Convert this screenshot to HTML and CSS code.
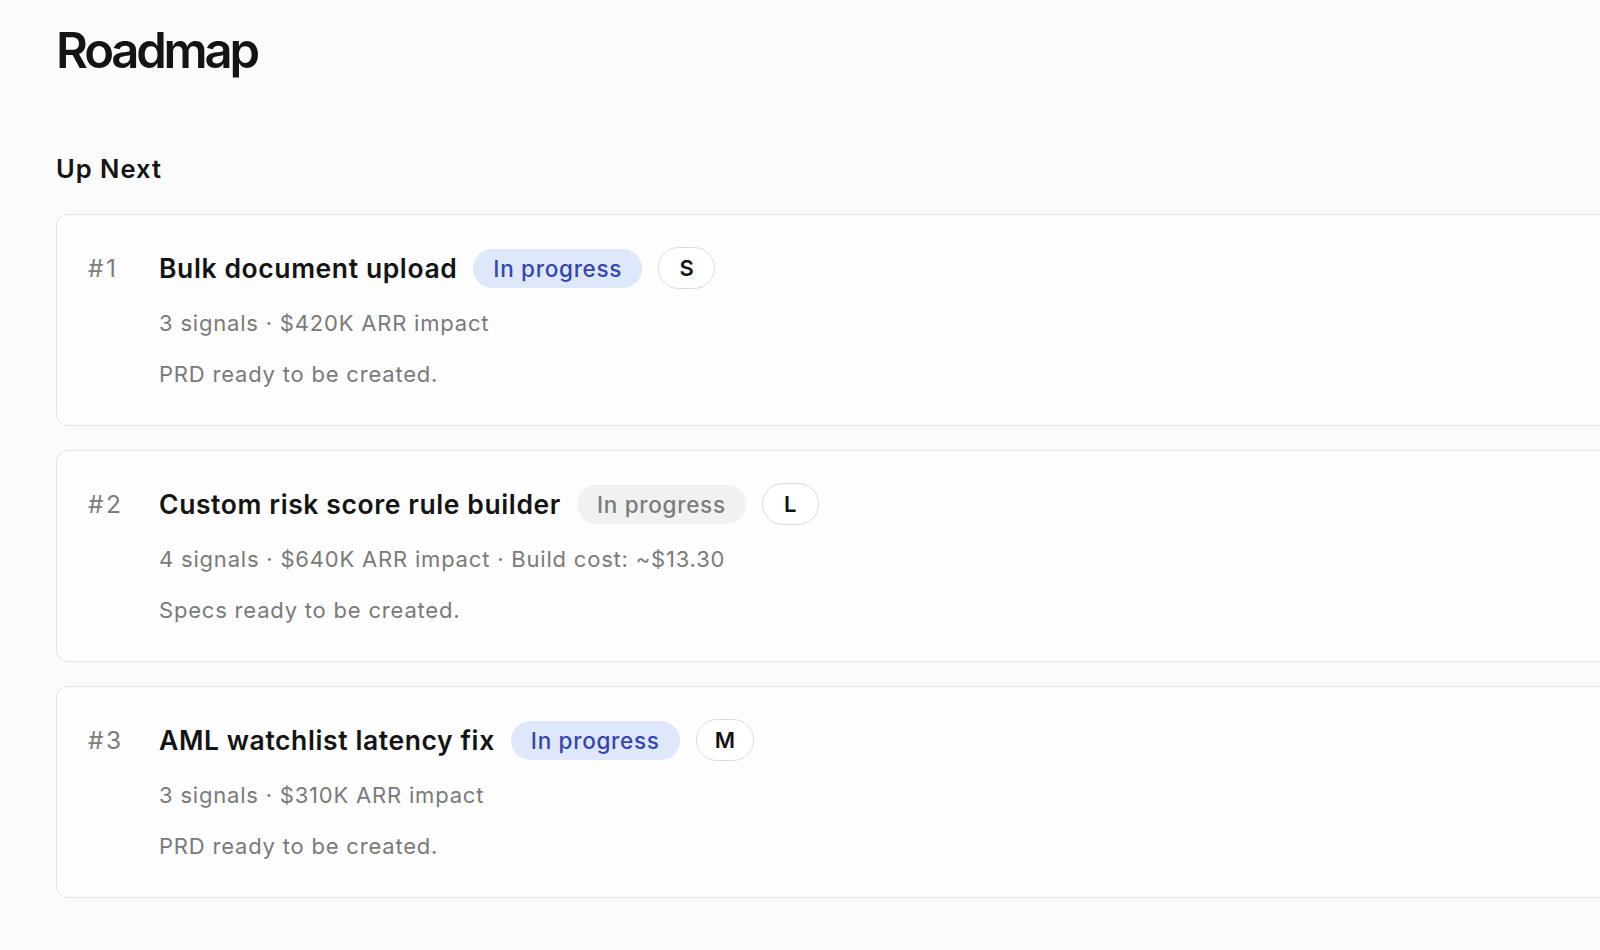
FILE: index.html
```html
<!DOCTYPE html>
<html>
  <head>
    <title>Roadmap</title>
    <meta name="viewport" content="width=device-width, initial-scale=1" />
    <link rel="stylesheet" href="styles.css">
  </head>
  <body>
    <div class="page">
      <h1>Roadmap</h1>
      <h2 class="section-title">Up Next</h2>
      <div class="item-list">
        <div class="item">
          <div class="rank">#1</div>
          <div class="item-body">
            <div class="item-head">
              <span class="item-title">Bulk document upload</span>
              <span class="status status-active">In progress</span>
              <span class="size">S</span>
            </div>
            <div class="meta">3 signals · $420K ARR impact</div>
            <div class="note">PRD ready to be created.</div>
          </div>
        </div>
        <div class="item">
          <div class="rank">#2</div>
          <div class="item-body">
            <div class="item-head">
              <span class="item-title">Custom risk score rule builder</span>
              <span class="status status-muted">In progress</span>
              <span class="size">L</span>
            </div>
            <div class="meta">4 signals · $640K ARR impact · Build cost: ~$13.30</div>
            <div class="note">Specs ready to be created.</div>
          </div>
        </div>
        <div class="item">
          <div class="rank">#3</div>
          <div class="item-body">
            <div class="item-head">
              <span class="item-title">AML watchlist latency fix</span>
              <span class="status status-active">In progress</span>
              <span class="size">M</span>
            </div>
            <div class="meta">3 signals · $310K ARR impact</div>
            <div class="note">PRD ready to be created.</div>
          </div>
        </div>
      </div>
    </div>
  </body>
</html>
```

FILE: styles.css
```css
body {
  margin: 0;
  font-family: Inter, "Noto Sans", Arial, sans-serif;
  background-color: #fbfbfb;
  color: #141414;
  overflow: hidden;
}
.page {
  padding: 22px 0 0 56px;
}
h1 {
  margin: 0;
  font-size: 49px;
  font-weight: 600;
  line-height: 58px;
  letter-spacing: -3.2px;
}
.section-title {
  margin: 74px 0 0;
  font-size: 25.5px;
  font-weight: 600;
  line-height: 30px;
  letter-spacing: 1px;
}
.item-list {
  display: flex;
  flex-direction: column;
  gap: 24px;
  width: 1600px;
  margin-top: 30px;
}
.item {
  display: flex;
  padding: 32px 0 36px 31px;
  background-color: #fdfdfd;
  border: 1px solid #e4e4e4;
  border-radius: 12px;
}
.rank {
  width: 71px;
  flex-shrink: 0;
  font-size: 24.5px;
  line-height: 42px;
  letter-spacing: 2.5px;
  color: #7c7c7c;
}
.item-head {
  display: flex;
  align-items: center;
  gap: 16px;
  height: 42px;
}
.item-title {
  font-size: 26.5px;
  font-weight: 600;
  letter-spacing: 0.6px;
}
.status {
  height: 39px;
  padding: 0 20px;
  border-radius: 20px;
  font-size: 22.5px;
  font-weight: 500;
  line-height: 39px;
  letter-spacing: 0.7px;
}
.status-active {
  background-color: #dfe7fb;
  color: #3346b2;
}
.status-muted {
  background-color: #f1f1f1;
  color: #7c7c7c;
}
.size {
  height: 42px;
  min-width: 57px;
  box-sizing: border-box;
  padding: 0 18px;
  border: 1px solid #dcdcdc;
  border-radius: 21px;
  background-color: #ffffff;
  font-size: 22px;
  font-weight: 600;
  line-height: 40px;
  text-align: center;
}
.meta {
  margin-top: 19px;
  font-size: 22px;
  line-height: 30px;
  letter-spacing: 0.8px;
  color: #7a7a7a;
}
.note {
  margin-top: 21px;
  font-size: 22px;
  line-height: 30px;
  letter-spacing: 0.8px;
  color: #7a7a7a;
}
```
